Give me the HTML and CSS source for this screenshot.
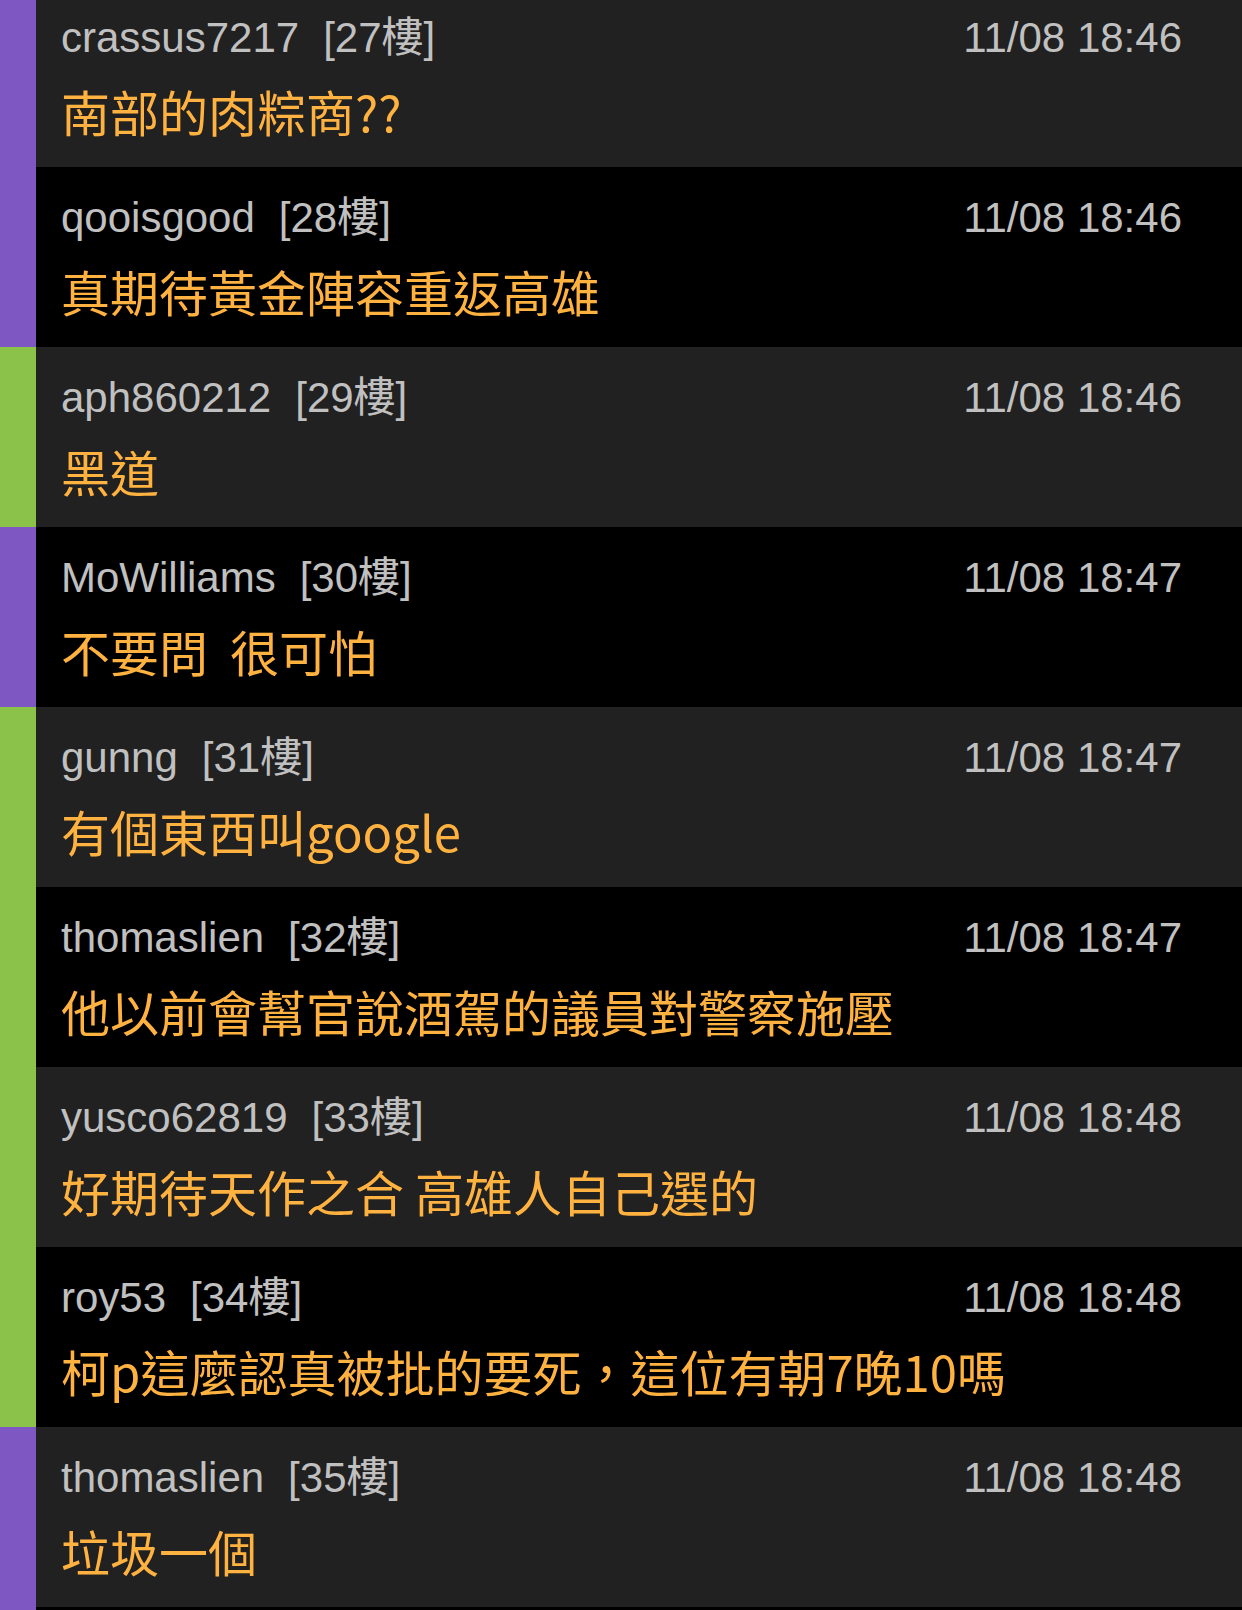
FILE: index.html
```html
<!DOCTYPE html>
<html lang="zh-Hant">
<head>
    <meta charset="UTF-8">
    <meta name="viewport" content="width=device-width, initial-scale=1.0">
    <title>推文</title>
    <link rel="stylesheet" href="styles.css">
</head>
<body>
    <div class="thread">
        <div class="reply odd purple">
            <div class="meta"><span class="user">crassus7217</span><span class="floor">[27樓]</span><span class="time">11/08 18:46</span></div>
            <div class="text">南部的肉粽商??</div>
        </div>
        <div class="reply even purple">
            <div class="meta"><span class="user">qooisgood</span><span class="floor">[28樓]</span><span class="time">11/08 18:46</span></div>
            <div class="text">真期待黃金陣容重返高雄</div>
        </div>
        <div class="reply odd green">
            <div class="meta"><span class="user">aph860212</span><span class="floor">[29樓]</span><span class="time">11/08 18:46</span></div>
            <div class="text">黑道</div>
        </div>
        <div class="reply even purple">
            <div class="meta"><span class="user">MoWilliams</span><span class="floor">[30樓]</span><span class="time">11/08 18:47</span></div>
            <div class="text">不要問  很可怕</div>
        </div>
        <div class="reply odd green">
            <div class="meta"><span class="user">gunng</span><span class="floor">[31樓]</span><span class="time">11/08 18:47</span></div>
            <div class="text">有個東西叫google</div>
        </div>
        <div class="reply even green">
            <div class="meta"><span class="user">thomaslien</span><span class="floor">[32樓]</span><span class="time">11/08 18:47</span></div>
            <div class="text">他以前會幫官說酒駕的議員對警察施壓</div>
        </div>
        <div class="reply odd green">
            <div class="meta"><span class="user">yusco62819</span><span class="floor">[33樓]</span><span class="time">11/08 18:48</span></div>
            <div class="text">好期待天作之合 高雄人自己選的</div>
        </div>
        <div class="reply even green">
            <div class="meta"><span class="user">roy53</span><span class="floor">[34樓]</span><span class="time">11/08 18:48</span></div>
            <div class="text">柯p這麼認真被批的要死，這位有朝7晚10嗎</div>
        </div>
        <div class="reply odd purple">
            <div class="meta"><span class="user">thomaslien</span><span class="floor">[35樓]</span><span class="time">11/08 18:48</span></div>
            <div class="text">垃圾一個</div>
        </div>
        <div class="reply even purple">
            <div class="meta"><span class="user">&nbsp;</span></div>
            <div class="text">&nbsp;</div>
        </div>
    </div>
</body>
</html>
```

FILE: styles.css
```css
body {
    margin: 0;
    background: #000;
    overflow: hidden;
}

.thread {
    margin-top: -13px;
}

.reply {
    height: 180px;
    box-sizing: border-box;
    padding: 27px 60px 0 25px;
    border-left: 36px solid;
}

.odd { background: #212121; }
.even { background: #000; }
.purple { border-left-color: #7e57c2; }
.green { border-left-color: #8bc34a; }

.meta {
    display: flex;
    align-items: baseline;
    font-family: "Liberation Sans", "Noto Sans CJK TC", sans-serif;
    font-size: 42px;
    line-height: 48px;
    color: #c0c0c0;
    white-space: nowrap;
}

.floor {
    margin-left: 24px;
}

.time {
    margin-left: auto;
}

.text {
    margin-top: 17px;
    font-family: "Noto Sans CJK TC", sans-serif;
    font-size: 49px;
    line-height: 64px;
    color: #ffb240;
    white-space: pre-wrap;
}
```
